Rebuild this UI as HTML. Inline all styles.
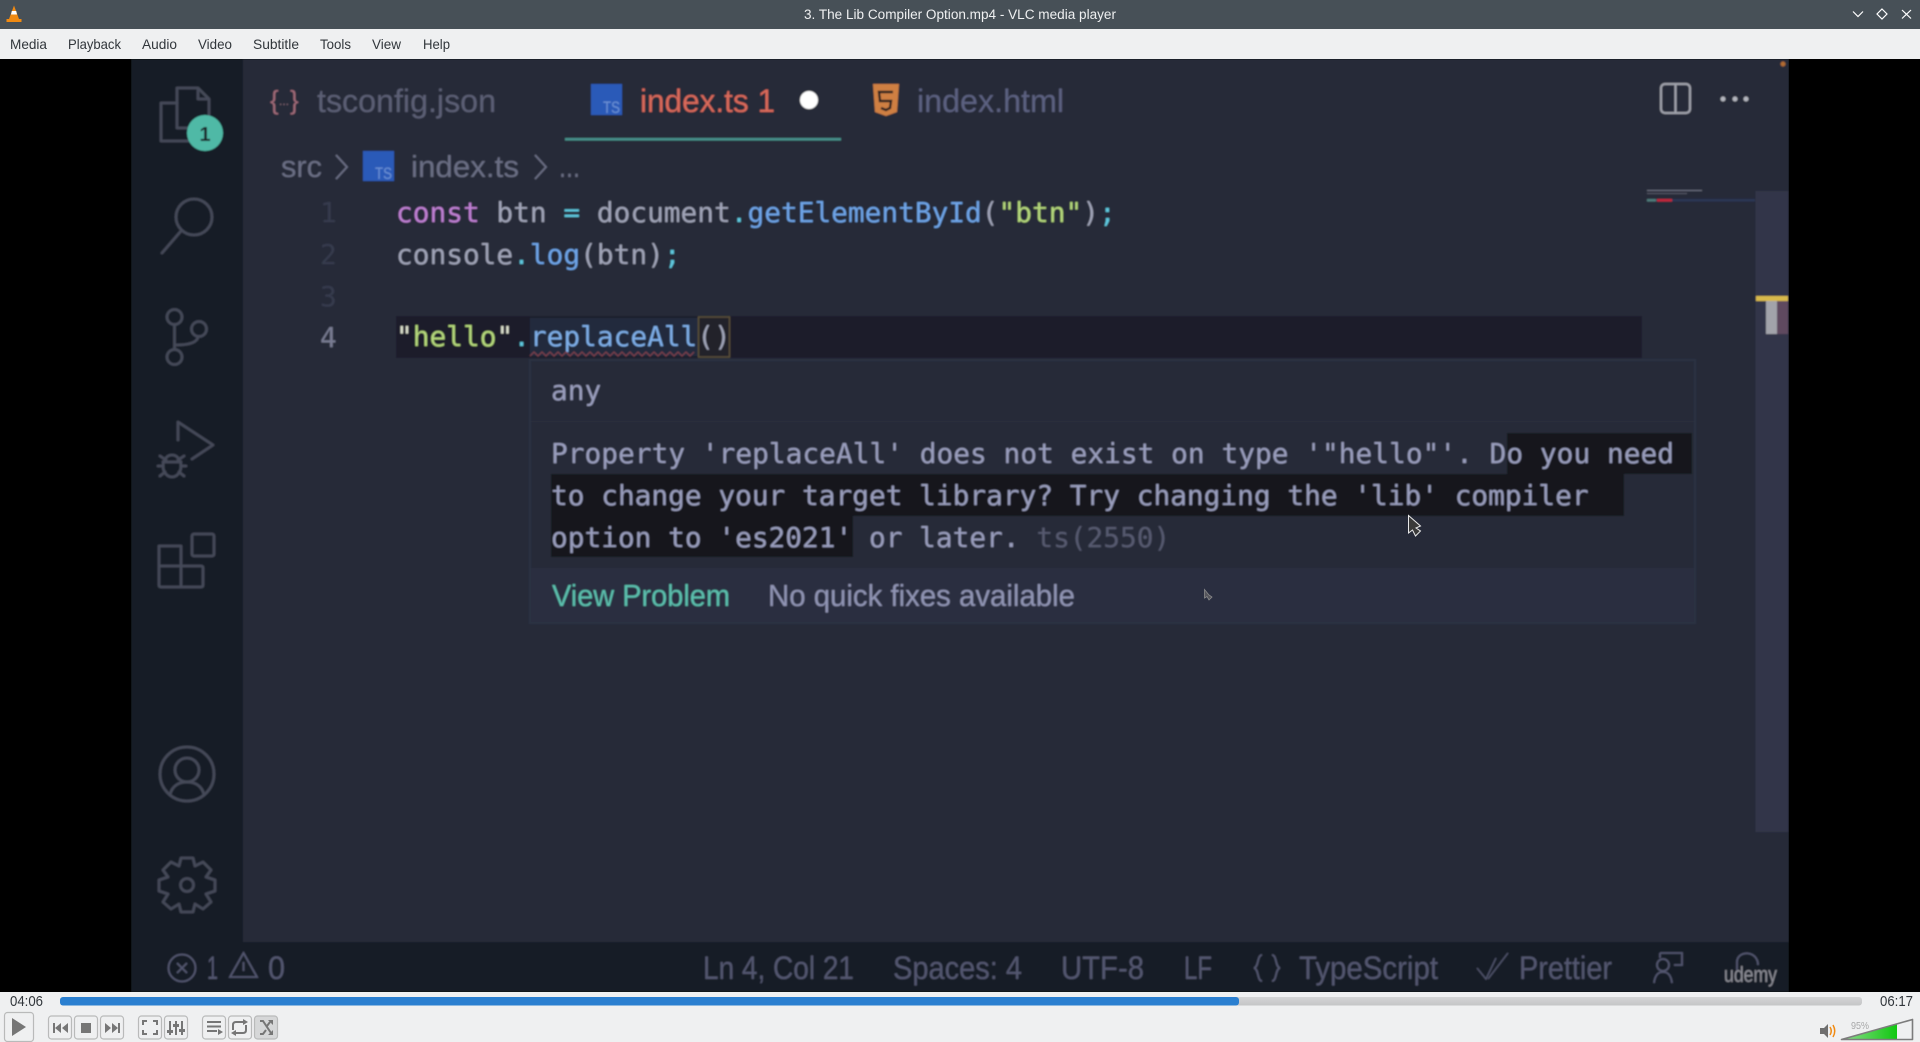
<!DOCTYPE html>
<html><head><meta charset="utf-8"><title>3. The Lib Compiler Option.mp4 - VLC media player</title>
<style>
html,body{margin:0;padding:0;width:1920px;height:1042px;overflow:hidden;background:#eff0f1}
svg{position:absolute;left:0;top:0;display:block}
.s{font-family:"Liberation Sans",sans-serif}
.m{font-family:"DejaVu Sans Mono","Liberation Mono",monospace;font-size:27.8px}
</style></head><body>
<svg width="1920" height="1042" viewBox="0 0 1920 1042" xmlns="http://www.w3.org/2000/svg">
<defs>
<filter id="b" x="0" y="0" width="100%" height="100%"><feGaussianBlur stdDeviation="0.8"/></filter>
<linearGradient id="vol" x1="0" x2="1" y1="0" y2="0"><stop offset="0" stop-color="#8fdc8f"/><stop offset="1" stop-color="#10c810"/></linearGradient>
<linearGradient id="pg" x1="0" x2="0" y1="0" y2="1"><stop offset="0" stop-color="#d4d5d6"/><stop offset="1" stop-color="#c4c5c6"/></linearGradient>
</defs>

<!-- window chrome -->
<rect width="1920" height="29" fill="#475057"/>
<rect y="29" width="1920" height="30" fill="#eff0f1"/>
<path d="M14 5.5 L9 19 H6.5 V22 H21.5 V19 H19 Z" fill="#f08a12"/>
<path d="M11.8 11 H16.2 L17 14.5 H11 Z" fill="#fff"/>
<text x="960" y="19" text-anchor="middle" class="s" font-size="13.5" fill="#eff0f1" textLength="312" lengthAdjust="spacingAndGlyphs">3. The Lib Compiler Option.mp4 - VLC media player</text>
<path d="M1853 11.5 L1858 16.5 L1863 11.5" fill="none" stroke="#fff" stroke-width="1.2"/>
<path d="M1882 9 L1887 14 L1882 19 L1877 14 Z" fill="none" stroke="#fff" stroke-width="1.2"/>
<path d="M1902 10 L1911 18.5 M1911 10 L1902 18.5" fill="none" stroke="#fff" stroke-width="1.2"/>
<g class="s" font-size="14" fill="#31363b">
<text x="10" y="49" textLength="37" lengthAdjust="spacingAndGlyphs">Media</text>
<text x="68" y="49" textLength="53" lengthAdjust="spacingAndGlyphs">Playback</text>
<text x="142" y="49" textLength="35" lengthAdjust="spacingAndGlyphs">Audio</text>
<text x="198" y="49" textLength="34" lengthAdjust="spacingAndGlyphs">Video</text>
<text x="253" y="49" textLength="46" lengthAdjust="spacingAndGlyphs">Subtitle</text>
<text x="320" y="49" textLength="31" lengthAdjust="spacingAndGlyphs">Tools</text>
<text x="372" y="49" textLength="29" lengthAdjust="spacingAndGlyphs">View</text>
<text x="423" y="49" textLength="27" lengthAdjust="spacingAndGlyphs">Help</text>
</g>

<!-- video -->
<rect y="59" width="1920" height="933" fill="#000"/>
<g filter="url(#b)">
<rect x="131" y="59" width="1658" height="933" fill="#262a39"/>
<rect x="131" y="59" width="112" height="883" fill="#191c27"/>
<rect x="131" y="942" width="1658" height="50" fill="#191c27"/>
<circle cx="1783" cy="64" r="2.5" fill="#b06a30"/>

<!-- activity icons -->
<g fill="none" stroke="#454959" stroke-width="2.8" stroke-linejoin="round" stroke-linecap="round">
<path d="M177 103 V88 H198 L209 99 V125 M198 88 V99 H209"/>
<path d="M177 103 H161 V141 H190 M177 103 V128 H190"/>
<circle cx="194" cy="217" r="18"/><path d="M181 231 L162 253"/>
<circle cx="174.5" cy="317" r="7.5"/><circle cx="199" cy="329" r="7.5"/><circle cx="174.5" cy="357" r="7.5"/>
<path d="M174.5 325 V349 M176 345 C190 345 197 342 198 337"/>
<path d="M178 440 V422 L213 445 L192 459"/>
<ellipse cx="172" cy="466" rx="9" ry="11"/><path d="M160 456 L166 460 M184 456 L178 460 M158 466 H163 M181 466 H186 M160 476 L165 472 M184 476 L179 472 M163 462 H181"/>
<rect x="192" y="534" width="22" height="22" rx="2"/>
<path d="M159 546 H181 V587 H161 Q159 587 159 585 Z M159 566 H201 Q203 566 203 568 V585 Q203 587 201 587 H181"/>
<circle cx="187" cy="774" r="27"/><circle cx="187" cy="770" r="12"/><path d="M170 795 C172 785 180 782 187 782 C194 782 202 785 204 795"/>
<path d="M181 858 H193 L195 866 L203 862 L211 870 L206 877 L215 880 V891 L206 894 L211 902 L203 909 L195 904 L193 912 H181 L179 904 L171 909 L163 902 L168 894 L159 891 V880 L168 877 L163 870 L171 862 L179 866 Z"/>
<circle cx="187" cy="885" r="6.5"/>
</g>
<circle cx="205" cy="133" r="18" fill="#4fb9a6"/>
<text x="205" y="141" text-anchor="middle" class="s" font-size="20" font-weight="bold" fill="#1a2028">1</text>

<!-- tabs -->
<text x="270" y="109" class="s" font-size="26" fill="#a06a78" textLength="8">{</text>
<text x="279" y="105" class="s" font-size="12" fill="#8a6a78" textLength="10">...</text>
<text x="290" y="109" class="s" font-size="26" fill="#a06a78" textLength="8">}</text>
<text x="317" y="112" class="s" font-size="32" fill="#5b5f74" textLength="179" lengthAdjust="spacingAndGlyphs">tsconfig.json</text>
<rect x="591" y="84" width="31" height="31" fill="#2c5ab8"/>
<text x="603" y="113" class="s" font-size="17" fill="#6d93d6" textLength="17" lengthAdjust="spacingAndGlyphs">TS</text>
<text x="640" y="112" class="s" font-size="32" fill="#d9695a" textLength="135" lengthAdjust="spacingAndGlyphs">index.ts 1</text>
<circle cx="809" cy="100" r="9" fill="#fff"/>
<rect x="565" y="138" width="276" height="2.5" fill="#46908a"/>
<path d="M873 84 H899 L897 112 L886 116 L875 112 Z" fill="#cf7f42"/>
<path d="M893 92 H879 L880 101 H891 L890 108 L886 110 L881 108" fill="none" stroke="#2a2022" stroke-width="2.4"/>
<text x="917" y="112" class="s" font-size="32" fill="#5b6180" textLength="147" lengthAdjust="spacingAndGlyphs">index.html</text>
<rect x="1661" y="84" width="29" height="29" rx="4" fill="none" stroke="#a0a2ac" stroke-width="2.2"/>
<path d="M1675.5 84 V113" stroke="#a0a2ac" stroke-width="2.2"/>
<circle cx="1723" cy="99" r="2.5" fill="#b4b6be"/><circle cx="1735" cy="99" r="2.5" fill="#b4b6be"/><circle cx="1746" cy="99" r="2.5" fill="#b4b6be"/>

<!-- breadcrumb -->
<g class="s" font-size="31" fill="#6a6e84">
<text x="281" y="177" textLength="41" lengthAdjust="spacingAndGlyphs">src</text>
<text x="411" y="177" textLength="108" lengthAdjust="spacingAndGlyphs">index.ts</text>
<text x="559" y="177" textLength="21" lengthAdjust="spacingAndGlyphs">...</text>
</g>
<path d="M336 155 L347 167 L336 179 M535 155 L546 167 L535 179" fill="none" stroke="#6a6e84" stroke-width="1.8"/>
<rect x="363" y="151" width="31" height="30" fill="#2c5ab8"/>
<text x="375" y="179" class="s" font-size="17" fill="#6d93d6" textLength="17" lengthAdjust="spacingAndGlyphs">TS</text>

<!-- line highlight -->
<rect x="396" y="316" width="1246" height="42" fill="#1c1e29"/>
<rect x="530" y="318" width="168" height="38" fill="#20293c"/>
<rect x="698.5" y="317" width="31" height="40" fill="#22232c" stroke="#5f5338" stroke-width="1.4"/>

<!-- line numbers -->
<g class="m" fill="#363a4d">
<text x="320" y="222">1</text><text x="320" y="264">2</text><text x="320" y="306">3</text>
<text x="320" y="347" fill="#787c92">4</text>
</g>

<!-- code -->
<text class="m" x="396" y="222" fill="#a0a4b8" xml:space="preserve"><tspan fill="#c080d4">const</tspan> btn <tspan fill="#5fc8de">=</tspan> document<tspan fill="#5fc8de">.</tspan><tspan fill="#6ea4e8">getElementById</tspan>(<tspan fill="#b5d97c">"btn"</tspan>)<tspan fill="#5fc8de">;</tspan></text>
<text class="m" x="396" y="264" fill="#a0a4b8" xml:space="preserve">console<tspan fill="#5fc8de">.</tspan><tspan fill="#6ea4e8">log</tspan>(btn)<tspan fill="#5fc8de">;</tspan></text>
<text class="m" x="396" y="346" fill="#a0a4b8" xml:space="preserve"><tspan fill="#dfe3d0">"</tspan><tspan fill="#b5d97c">hello</tspan><tspan fill="#dfe3d0">"</tspan><tspan fill="#5fc8de">.</tspan><tspan fill="#7eaee8">replaceAll</tspan>()</text>
<path d="M530 356 l4 -4 l4 4 l4 -4 l4 4 l4 -4 l4 4 l4 -4 l4 4 l4 -4 l4 4 l4 -4 l4 4 l4 -4 l4 4 l4 -4 l4 4 l4 -4 l4 4 l4 -4 l4 4 l4 -4 l4 4 l4 -4 l4 4 l4 -4 l4 4 l4 -4 l4 4 l4 -4 l4 4 l4 -4 l4 4 l4 -4 l4 4 l4 -4 l4 4 l4 -4 l4 4 l4 -4 l4 4 l4 -4" fill="none" stroke="#7a3f4c" stroke-width="1.3"/>

<!-- minimap + scrollbar -->
<rect x="1647" y="190" width="55" height="1" fill="#6f7282"/>
<rect x="1647" y="193" width="40" height="1" fill="#565968"/>
<rect x="1647" y="199" width="108" height="2.5" fill="#2a3554"/>
<rect x="1657" y="199" width="15" height="2.5" fill="#c2263a"/>
<rect x="1647" y="199" width="9" height="2.5" fill="#4f7a7a"/>
<rect x="1755.5" y="191" width="33" height="641" fill="#30344a"/>
<rect x="1756" y="296" width="32" height="5" fill="#d8b94c"/>
<rect x="1766" y="301" width="11" height="33" fill="#a2a3aa"/>
<rect x="1777" y="301" width="11" height="33" fill="#5e4a5e"/>

<!-- hover popup -->
<rect x="530" y="360" width="1165" height="263" fill="#262a39" stroke="#2c3142" stroke-width="2"/>
<rect x="531" y="421" width="1163" height="1" fill="#292d3d"/>
<rect x="531" y="568" width="1163" height="54" fill="#2a2e41"/>
<rect x="1507" y="433" width="185" height="41" fill="#14171e"/>
<rect x="551" y="474" width="1073" height="42" fill="#14171e"/>
<rect x="551" y="516" width="302" height="41" fill="#14171e"/>
<g class="m" fill="#9a9ebd">
<text x="551" y="400">any</text>
<text x="551" y="463" xml:space="preserve" textLength="1123">Property 'replaceAll' does not exist on type '"hello"'. Do you need</text>
<text x="551" y="505" xml:space="preserve">to change your target library? Try changing the 'lib' compiler</text>
<text x="551" y="547" xml:space="preserve">option to 'es2021' or later. <tspan fill="#565a70">ts(2550)</tspan></text>
</g>
<text x="552" y="606" class="s" font-size="31" fill="#5cc0ae" textLength="178" lengthAdjust="spacingAndGlyphs">View Problem</text>
<text x="768" y="606" class="s" font-size="31" fill="#9094b4" textLength="307" lengthAdjust="spacingAndGlyphs">No quick fixes available</text>

<!-- status bar -->
<g class="s" font-size="32" fill="#52566f">
<text x="207" y="979" textLength="11" lengthAdjust="spacingAndGlyphs">1</text>
<text x="268" y="979" textLength="17" lengthAdjust="spacingAndGlyphs">0</text>
<text x="703" y="979" textLength="151" lengthAdjust="spacingAndGlyphs">Ln 4, Col 21</text>
<text x="893" y="979" textLength="129" lengthAdjust="spacingAndGlyphs">Spaces: 4</text>
<text x="1061" y="979" textLength="83" lengthAdjust="spacingAndGlyphs">UTF-8</text>
<text x="1184" y="979" textLength="28" lengthAdjust="spacingAndGlyphs">LF</text>
<text x="1299" y="979" textLength="139" lengthAdjust="spacingAndGlyphs">TypeScript</text>
<text x="1519" y="979" textLength="93" lengthAdjust="spacingAndGlyphs">Prettier</text>
</g>
<g fill="none" stroke="#52566f" stroke-width="1.8">
<path d="M1262 955 C1257 955 1259 967 1254 968 C1259 969 1257 981 1262 981 M1272 955 C1277 955 1275 967 1280 968 C1275 969 1277 981 1272 981"/>
<circle cx="182" cy="968" r="13.5"/><path d="M177 963 L187 973 M187 963 L177 973"/>
<path d="M243.5 953 L257 977 H230 Z M243.5 962 V971"/>
<path d="M1477 968 L1486 979 L1496 958 M1488 979 L1508 953" stroke-width="1.3"/>
<path d="M1660 953 H1682 V965 H1674 M1660 953 V958"/><circle cx="1663" cy="965" r="6"/><path d="M1654 983 C1655 975 1658 972 1663 972 C1668 972 1671 975 1672 983"/>
<path d="M1737 970 V962 C1737 950 1758 950 1758 965"/>
</g>
<text x="1724" y="982" class="s" font-size="22" fill="#8e8f98" textLength="53" lengthAdjust="spacingAndGlyphs">udemy</text>
</g>

<!-- mouse cursors -->
<path d="M1408.5 515.5 V533 L1412.5 530 L1415.5 536 L1420.5 531 L1416 528 L1420.5 526 Z" fill="#3a3a3a" stroke="#e8e8e8" stroke-width="1"/>
<path d="M1204.5 589.5 V598 L1207 596.5 L1209 600 L1212 597 L1209 595 Z" fill="#55555c" stroke="#8a8a8a" stroke-width="0.8"/>

<!-- bottom controls -->
<rect y="992" width="1920" height="50" fill="#eff0f1"/>
<g class="s" font-size="15" fill="#31363b">
<text x="10" y="1006" textLength="33" lengthAdjust="spacingAndGlyphs">04:06</text>
<text x="1880" y="1006" textLength="33" lengthAdjust="spacingAndGlyphs">06:17</text>
</g>
<rect x="60" y="997" width="1802" height="8.5" rx="3" fill="url(#pg)"/>
<rect x="60" y="997" width="1179" height="8.5" rx="3" fill="#2a7fd0"/>

<g fill="#eff0f1" stroke="#b9baba" stroke-width="1.2">
<rect x="4.5" y="1012.5" width="29" height="29" rx="3"/>
<rect x="48.5" y="1016" width="23" height="23" rx="3"/>
<rect x="74.5" y="1016" width="23" height="23" rx="3"/>
<rect x="100.5" y="1016" width="23" height="23" rx="3"/>
<rect x="138.5" y="1016" width="23" height="23" rx="3"/>
<rect x="164.5" y="1016" width="23" height="23" rx="3"/>
<rect x="202.5" y="1016" width="23" height="23" rx="3"/>
<rect x="228.5" y="1016" width="23" height="23" rx="3"/>
<rect x="254.5" y="1016" width="23" height="23" rx="3" fill="#d6d7d8"/>
</g>
<g fill="#767676">
<path d="M12 1018 L26 1027 L12 1036 Z"/>
<path d="M53 1023 H55 V1033 H53 Z M61 1023 V1033 L55 1028 Z M68 1023 V1033 L62 1028 Z"/>
<rect x="81" y="1023" width="10" height="10"/>
<path d="M105 1023 L111 1028 L105 1033 Z M112 1023 L118 1028 L112 1033 Z M118 1023 H120 V1033 H118 Z"/>
<path d="M169 1021 H171 V1035 H169 Z M175 1021 H177 V1035 H175 Z M181 1021 H183 V1035 H181 Z"/>
<path d="M167 1030 H173 V1033 H167 Z M173 1024 H179 V1027 H173 Z M179 1029 H185 V1032 H179 Z"/>
<path d="M207 1021 H221 V1023 H207 Z M207 1025.5 H221 V1027.5 H207 Z M207 1030 H217 V1032 H207 Z M218 1029 L223 1032 L218 1035 Z"/>
<path d="M243 1019 L248 1022 L243 1025 Z M236 1030 L231 1033 L236 1036 Z"/>
<path d="M268 1020 H273 V1025 Z M268 1035 H273 V1030 Z"/>
</g>
<g fill="none" stroke="#767676" stroke-width="2">
<path d="M143 1025 V1021 H147 M153 1021 H157 V1025 M157 1030 V1034 H153 M147 1034 H143 V1030"/>
<path d="M233 1030 V1025 Q233 1022 236 1022 H244 M246 1025 V1030 Q246 1033 243 1033 H235"/>
<path d="M260 1021 H263 L271 1033 M260 1034 H263 L266 1030 M267 1026 L270 1022"/>
</g>

<!-- volume -->
<path d="M1820 1028 H1824 L1828 1024 V1038 L1824 1034 H1820 Z" fill="#6f6f6f"/>
<path d="M1830 1027 Q1832.5 1031 1830 1035 M1833 1025 Q1836.5 1031 1833 1037" fill="none" stroke="#f08a12" stroke-width="1.5"/>
<path d="M1841.5 1039.5 L1912.5 1019.5 V1039.5 Z" fill="#eff0f1"/>
<path d="M1841.5 1039.5 L1897 1023.5 V1039.5 Z" fill="url(#vol)"/>
<path d="M1841.5 1039.5 L1912.5 1019.5 V1039.5 Z" fill="none" stroke="#7c7c7c" stroke-width="1.6" stroke-linejoin="round"/>
<text x="1851" y="1029" class="s" font-size="10.5" fill="#a6a7a8" textLength="18" lengthAdjust="spacingAndGlyphs">95%</text>
</svg>
</body></html>
